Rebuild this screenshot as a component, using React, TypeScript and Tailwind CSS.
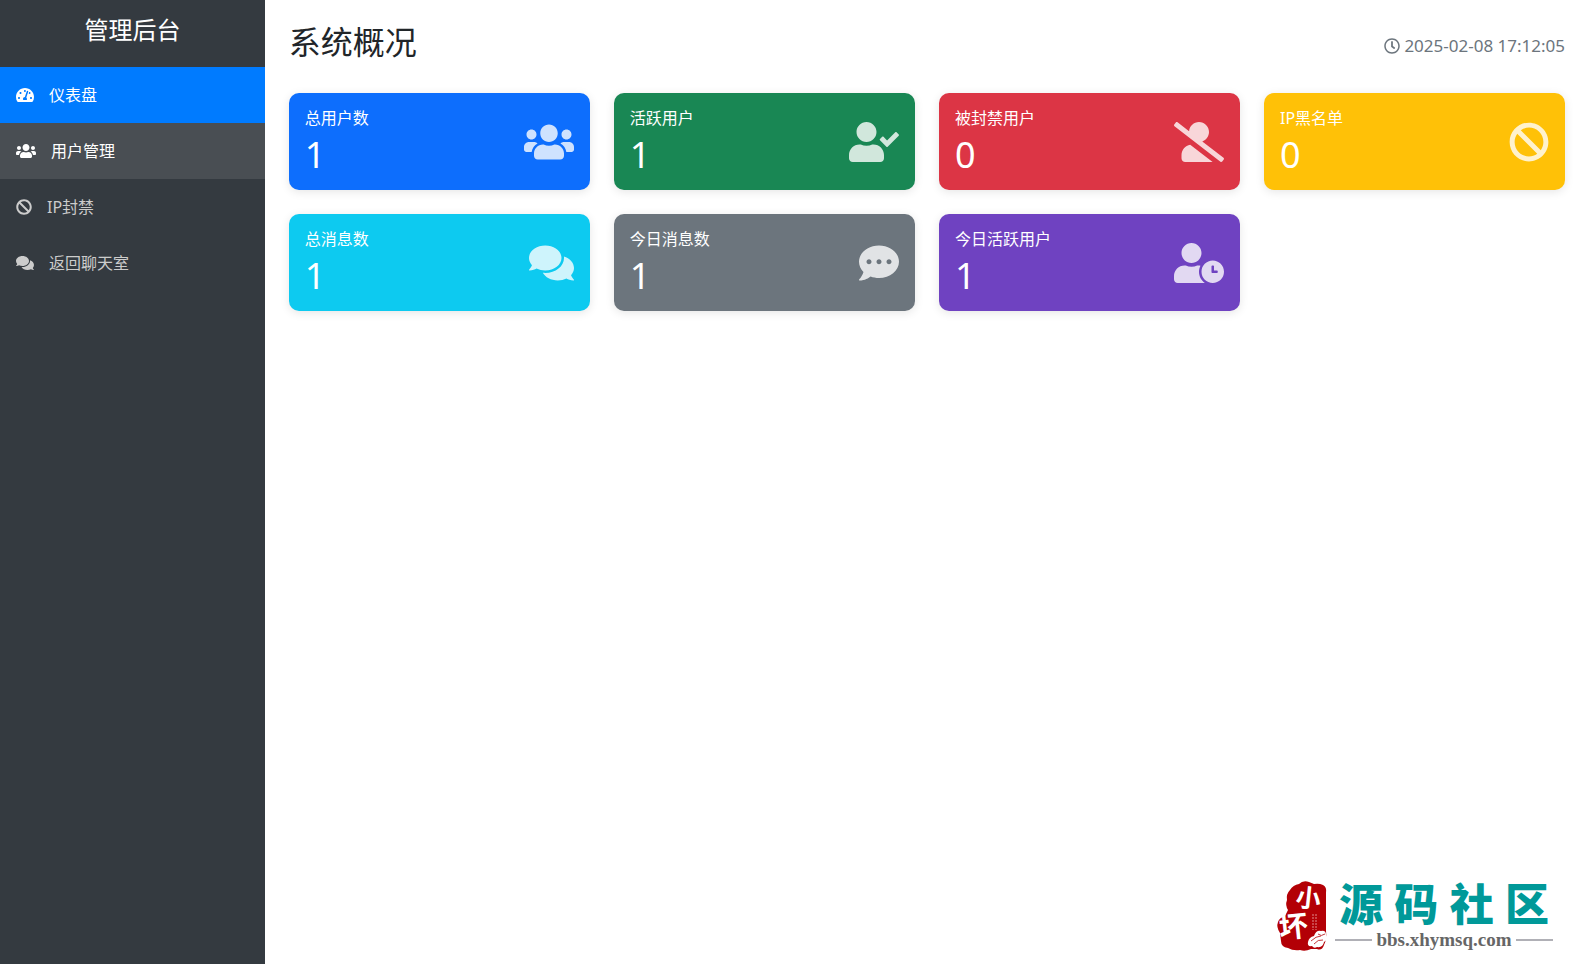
import type { IconType } from "react-icons";
import {
  FaBan,
  FaCommentDots,
  FaComments,
  FaRegClock,
  FaTachometerAlt,
  FaUserCheck,
  FaUserClock,
  FaUsers,
  FaUserSlash,
} from "react-icons/fa";
import clsx from "clsx";

interface NavItem {
  label: string;
  icon: IconType;
  size: string;
  state: string;
}

interface Stat {
  label: string;
  value: number;
  icon: IconType;
  size: string;
  color: string;
}

const idle = "text-[#cccccc] hover:bg-[#494e53] hover:text-white";

const navItems: NavItem[] = [
  { label: "仪表盘", icon: FaTachometerAlt, size: "w-[18px]", state: "bg-[#007bff] text-white" },
  { label: "用户管理", icon: FaUsers, size: "w-5", state: "bg-[#494e53] text-white" },
  { label: "IP封禁", icon: FaBan, size: "w-4", state: idle },
  { label: "返回聊天室", icon: FaComments, size: "w-[18px]", state: idle },
];

const stats: Stat[] = [
  { label: "总用户数", value: 1, icon: FaUsers, size: "w-[50px]", color: "bg-[#0d6efd]" },
  { label: "活跃用户", value: 1, icon: FaUserCheck, size: "w-[50px]", color: "bg-[#198754]" },
  { label: "被封禁用户", value: 0, icon: FaUserSlash, size: "w-[50px]", color: "bg-[#dc3545]" },
  { label: "IP黑名单", value: 0, icon: FaBan, size: "w-10", color: "bg-[#ffc107]" },
  { label: "总消息数", value: 1, icon: FaComments, size: "w-[45px]", color: "bg-[#0dcaf0]" },
  { label: "今日消息数", value: 1, icon: FaCommentDots, size: "w-10", color: "bg-[#6c757d]" },
  { label: "今日活跃用户", value: 1, icon: FaUserClock, size: "w-[50px]", color: "bg-[#6f42c1]" },
];

function Sidebar() {
  return (
    <aside className="w-1/6 shrink-0 bg-[#343a40]">
      <h2 className="pt-3 pb-[19px] text-center text-2xl leading-9 text-white">管理后台</h2>
      <nav>
        {navItems.map(({ label, icon: Icon, size, state }) => (
          <a key={label} href="#" className={clsx("flex h-14 items-center gap-[15px] px-4 text-base", state)}>
            <Icon className={clsx("h-4 shrink-0", size)} />
            {label}
          </a>
        ))}
      </nav>
    </aside>
  );
}

function StatCard({ label, value, icon: Icon, size, color }: Stat) {
  return (
    <div className={clsx("flex items-center justify-between rounded-[10px] p-4 text-white shadow-[0_2px_10px_rgba(0,0,0,0.1)]", color)}>
      <div>
        <h6 className="text-base leading-[18px]">{label}</h6>
        <p className="mt-2 text-4xl leading-[39px]">{value}</p>
      </div>
      <Icon className={clsx("h-10 shrink-0 opacity-80", size)} />
    </div>
  );
}

function Seal() {
  return (
    <svg viewBox="0 0 50 70" className="h-[70px] w-[50px] overflow-visible">
      <path
        d="M22 3 Q26-1 32 1 L37 3 Q42 2 46 4 Q50 6 49 12 L49 50 Q50 58 47 64 Q45 70 40 68 L34 68 Q28 71 23 69 Q16 70 11 67 Q4 66 4 60 L3 52 Q-1 46 1 41 Q2 37 8 35 L11 29 Q8 24 10 19 Q9 13 13 9 Q16 4 22 3Z"
        fill="#b30006"
      />
      <text x="19" y="26" fontSize="25" fontWeight="700" fill="#fff" transform="rotate(6 30 16)">小</text>
      <text x="2" y="56" fontSize="29" fontWeight="700" fill="#fff" transform="rotate(-6 16 46)">坏</text>
      <path d="M36 33v16M39 33v16" stroke="#e08a8c" strokeWidth="1" strokeDasharray="2 1" />
      <path d="M31 61 q1-5 6-6 q2-6 7-5 q5-1 5 4 q3 4-2 7 q-1 6-7 5 q-3 2-5-1 q-5 1-4-4Z" fill="#fff" />
      <path d="M34 60q5-5 10-5M37 63q4-5 9-4M41 53q3 3 7 0" fill="none" stroke="#c4383c" strokeWidth="1" />
    </svg>
  );
}

function Watermark() {
  return (
    <footer className="mt-auto mr-3 mb-3 flex items-center gap-2 self-end">
      <Seal />
      <div className="w-[218px]">
        <div className="flex justify-between px-1 text-[44px] leading-[48px] font-black text-[#009999]">
          <span>源</span>
          <span>码</span>
          <span>社</span>
          <span>区</span>
        </div>
        <div className="flex items-center gap-1 font-['Liberation_Serif',serif] text-[19px] leading-6 font-bold text-[#666666]">
          <span className="h-0.5 flex-1 bg-[#b0b0b6]" />
          bbs.xhymsq.com
          <span className="h-0.5 flex-1 bg-[#b0b0b6]" />
        </div>
      </div>
    </footer>
  );
}

export default function App() {
  return (
    <div className="flex min-h-screen bg-white font-['Noto_Sans','Noto_Sans_CJK_SC',sans-serif] text-[#212529]">
      <Sidebar />
      <main className="flex flex-1 flex-col px-6 pt-6">
        <header className="mb-[29px] flex items-end justify-between">
          <h1 className="pb-1 text-[32px] leading-9">系统概况</h1>
          <div className="flex items-center gap-1 text-[17px] leading-9 text-[#6c757d]">
            <FaRegClock className="size-4" />
            <time>2025-02-08 17:12:05</time>
          </div>
        </header>
        <section className="grid grid-cols-4 gap-6">
          {stats.map((stat) => (
            <StatCard key={stat.label} {...stat} />
          ))}
        </section>
        <Watermark />
      </main>
    </div>
  );
}
